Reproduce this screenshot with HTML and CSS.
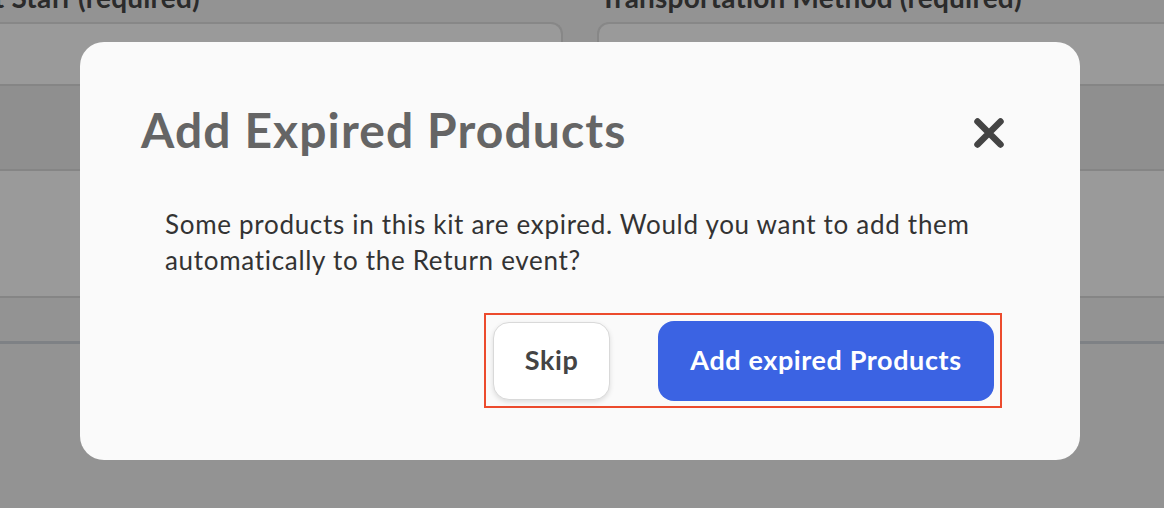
FILE: index.html
```html
<!DOCTYPE html>
<html lang="en">
<head>
<meta charset="utf-8">
<title>Add Expired Products</title>
<link rel="stylesheet" href="styles.css">
</head>
<body>
<div class="page">
  <div class="fields">
    <div class="field">
      <div class="label">Assistant Staff (required)</div>
      <div class="input"></div>
    </div>
    <div class="field">
      <div class="label">Transportation Method (required)</div>
      <div class="input"></div>
    </div>
  </div>
  <div class="row row-a"></div>
  <div class="row row-b"></div>
  <div class="row row-c"></div>
</div>

<div class="modal" role="dialog" aria-labelledby="modal-title">
  <div class="modal-head">
    <h2 class="modal-title" id="modal-title">Add Expired Products</h2>
    <button class="close" aria-label="Close">
      <svg width="30" height="30" viewBox="0 0 30 30" aria-hidden="true">
        <path d="M3.5 3.5 L26.5 26.5 M26.5 3.5 L3.5 26.5" stroke="#444" stroke-width="6.5" stroke-linecap="round" fill="none"/>
      </svg>
    </button>
  </div>
  <p class="modal-text">Some products in this kit are expired. Would you want to add them automatically to the Return event?</p>
  <div class="actions">
    <div class="highlight">
      <button class="btn btn-skip">Skip</button>
      <button class="btn btn-primary">Add expired Products</button>
    </div>
  </div>
</div>
</body>
</html>
```
FILE: styles.css
```css
html, body {
  margin: 0;
  padding: 0;
}
body {
  width: 1164px;
  height: 508px;
  overflow: hidden;
  background: #939393;
  font-family: Lato, "Noto Sans", sans-serif;
  position: relative;
}
.page {
  display: flex;
  flex-direction: column;
}
.fields {
  display: grid;
  grid-template-columns: 693px 663px;
  column-gap: 34px;
  margin-left: -130px;
  margin-top: -20px;
}
.field {
  display: flex;
  flex-direction: column;
}
.label {
  font-size: 28px;
  font-weight: 700;
  letter-spacing: 0.2px;
  line-height: 34px;
  color: #2b2b2b;
  height: 34px;
  padding-left: 3px;
  margin-bottom: 8px;
  white-space: nowrap;
}
.field:first-child .label {
  text-align: right;
  padding-right: 363px;
  padding-left: 0;
}
.input {
  height: 60px;
  background: #9a9a9a;
  border: 2px solid #878787;
  border-bottom: none;
  border-radius: 12px 12px 0 0;
}
.row {
  border-top: 2px solid #858585;
}
.row-a {
  height: 83px;
  background: #8f8f8f;
}
.row-b {
  height: 125px;
  background: #9a9a9a;
}
.row-c {
  height: 43px;
  background: #939393;
  border-bottom: 3px solid #7e8185;
}

.modal {
  position: absolute;
  left: 80px;
  top: 42px;
  width: 1000px;
  height: 418px;
  box-sizing: border-box;
  background: #fafafa;
  border-radius: 24px;
  padding: 60px 78px 0 61px;
}
.modal-head {
  display: flex;
  align-items: center;
  justify-content: space-between;
}
.modal-title {
  margin: 0;
  font-size: 48px;
  letter-spacing: 1.1px;
  line-height: 56px;
  font-weight: 700;
  color: #656565;
}
.close {
  border: none;
  background: none;
  padding: 0;
  width: 30px;
  height: 30px;
  display: flex;
  margin-top: 5px;
  margin-right: -2px;
}
.modal-text {
  margin: 48px 0 0 24px;
  font-size: 26px;
  letter-spacing: 0.7px;
  line-height: 36px;
  color: #333;
}
.actions {
  display: flex;
  justify-content: flex-end;
  margin-top: 35px;
}
.highlight {
  display: flex;
  align-items: center;
  gap: 48px;
  border: 2px solid #ec4b2d;
  padding: 6px 6px 5px 7px;
}
.btn {
  font-family: Lato, "Noto Sans", sans-serif;
  font-size: 27px;
  letter-spacing: 0.6px;
  font-weight: 700;
  border-radius: 16px;
  cursor: pointer;
  padding: 0 0 3px;
}
.btn-skip {
  width: 117px;
  height: 78px;
  background: #fff;
  color: #444;
  border: 1px solid #d9d9d9;
  box-shadow: 0 2px 5px rgba(0,0,0,0.12);
}
.btn-primary {
  width: 336px;
  height: 80px;
  background: #3b63e3;
  color: #fff;
  border: none;
}
```
